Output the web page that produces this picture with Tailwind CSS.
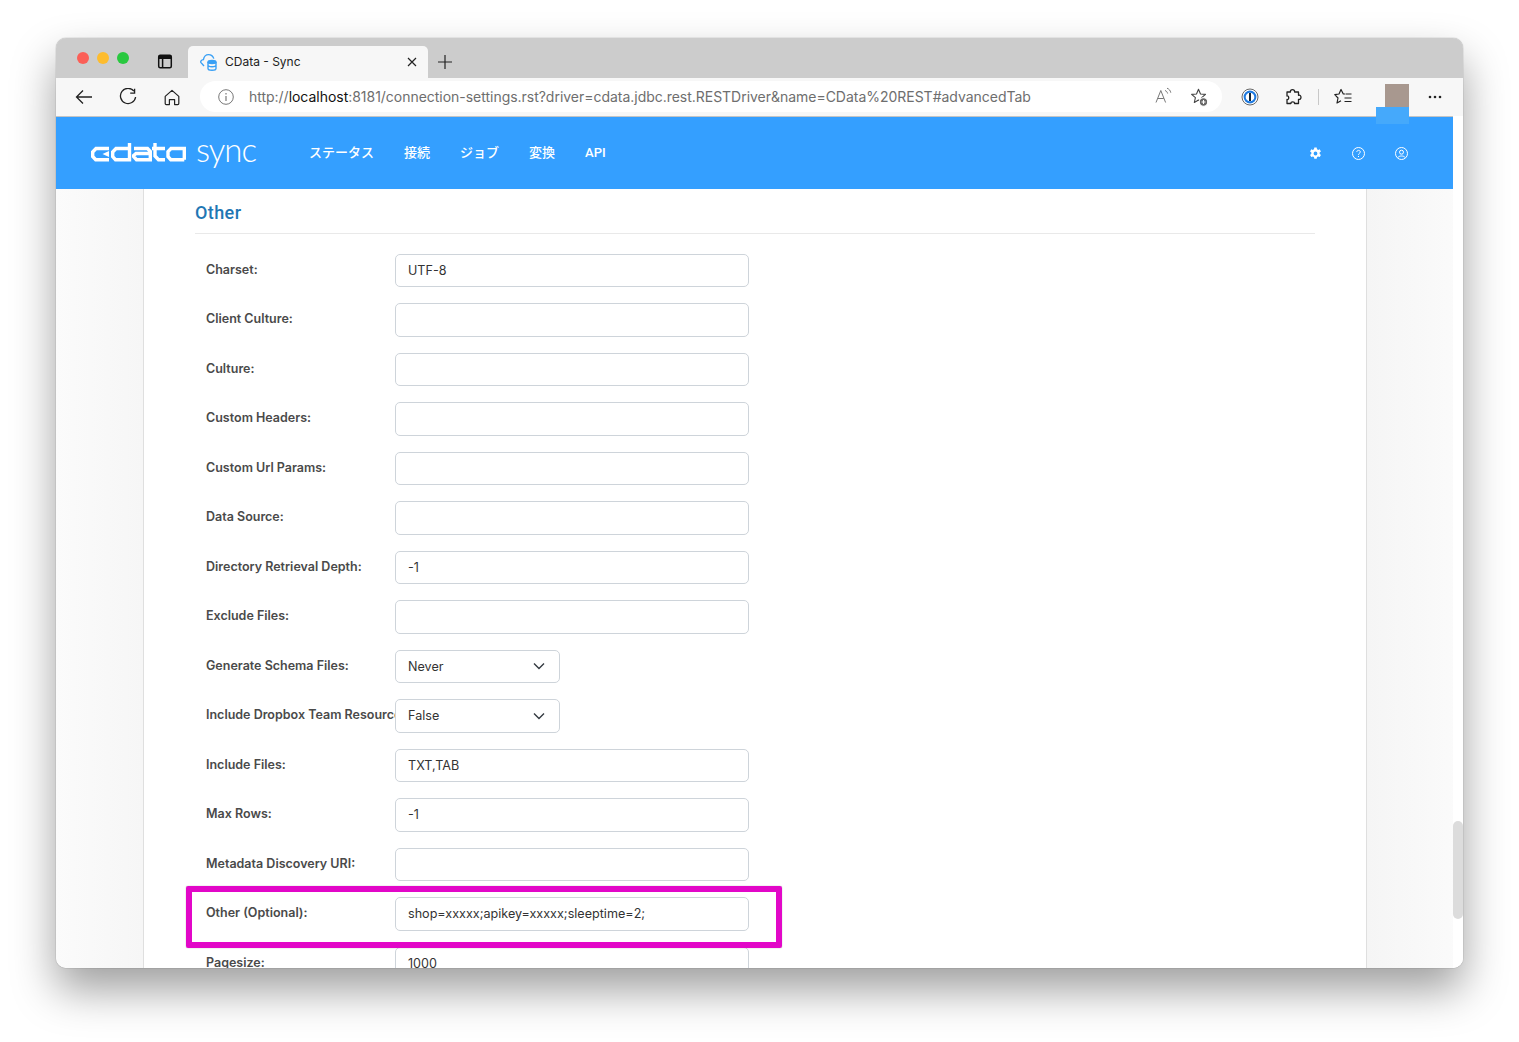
<!DOCTYPE html>
<html>
<head>
<meta charset="utf-8">
<script src="https://cdn.jsdelivr.net/npm/@tailwindcss/browser@4"></script>
<title>CData - Sync</title>
</head>
<body class="bg-white h-[1042px] w-[1519px] overflow-hidden font-['Roboto','Noto_Sans_CJK_JP',sans-serif]">
<div class="relative ml-[56px] mt-[38px] w-[1407px] h-[930px] rounded-[10px] shadow-[0_0_1px_rgba(0,0,0,0.6),0_22px_44px_rgba(0,0,0,0.38)] overflow-hidden bg-white flex flex-col">
  <!-- Title bar -->
  <div class="h-[40px] shrink-0 bg-[#cccccc] flex items-start relative">
    <div class="flex gap-[8px] ml-[21px] mt-[14px]">
      <span class="w-[12px] h-[12px] rounded-full bg-[#fb5f57] "></span>
      <span class="w-[12px] h-[12px] rounded-full bg-[#fdbc2e]"></span>
      <span class="w-[12px] h-[12px] rounded-full bg-[#29c83f]"></span>
    </div>
    <svg class="ml-[28px] mt-[16px]" width="16" height="15" viewBox="0 0 16 15" fill="none" stroke="#111" stroke-width="1.5"><rect x="1.7" y="1.2" width="12.6" height="12.6" rx="1.5"/><path d="M1.7 3.4h12.6" stroke-width="3"/><path d="M5.6 4v9.6"/></svg>
    <div class="ml-[15px] mt-[8px] w-[240px] h-[32px] bg-[#f7f7f7] rounded-t-[5px] flex items-center text-[12px] text-[#222] font-['Inter',sans-serif] relative">
      <svg class="ml-[11px]" width="20" height="18" viewBox="0 0 20 18" fill="none" stroke="#3aa0f5" stroke-width="1.4"><path d="M5 13 L1.8 9.4 C1.4 8.8 2 7 4.4 6.6 C5 3.4 7 1.6 9.5 1.6 C12 1.6 14 3.2 14.8 5.6"/><ellipse cx="13" cy="9" rx="4" ry="1.5" fill="#3aa0f5"/><path d="M9 9v6.5c0 1 1.8 1.8 4 1.8s4-.8 4-1.8V9M9 12c0 1 1.8 1.7 4 1.7s4-.7 4-1.7M9 14.5"/></svg>
      <span class="ml-[6px]">CData - Sync</span>
      <svg class="absolute right-[11px] top-[11px]" width="10" height="10" viewBox="0 0 10 10" stroke="#222" stroke-width="1.2"><path d="M1 1l8 8M9 1l-8 8"/></svg>
    </div>
    <svg class="ml-[9px] mt-[16px]" width="16" height="16" viewBox="0 0 16 16" stroke="#222" stroke-width="1.2"><path d="M8 1v14M1 8h14"/></svg>
  </div>
  <!-- Toolbar -->
  <div class="h-[39px] shrink-0 bg-[#f7f7f7] border-b border-[#c4c4c4] flex items-center relative">
    <svg class="ml-[19px]" width="18" height="16" viewBox="0 0 18 16" fill="none" stroke="#222" stroke-width="1.3"><path d="M17 8H1.5M8 1.5 1.5 8 8 14.5"/></svg>
    <svg class="ml-[26px]" width="18" height="18" viewBox="0 0 18 18" fill="none" stroke="#222" stroke-width="1.3"><path d="M15 3.2A7.6 7.6 0 1 0 16.6 9"/><path d="M15.6 0.8v4.4h-4.4"/></svg>
    <svg class="ml-[27px]" width="16" height="17" viewBox="0 0 16 17" fill="none" stroke="#222" stroke-width="1.2"><path d="M1.2 7.4 8 1.4l6.8 6v7.2a1 1 0 0 1-1 1h-3.2v-5H5.4v5H2.2a1 1 0 0 1-1-1z" stroke-linejoin="round"/></svg>
    <div class="absolute left-[144px] top-[3px] w-[1022px] h-[31px] bg-white rounded-full flex items-center">
      <svg class="ml-[18px]" width="16" height="16" viewBox="0 0 16 16" fill="none" stroke="#777" stroke-width="1"><circle cx="8" cy="8" r="7.3"/><path d="M8 7v5M8 4v1.4" stroke-width="1.2"/></svg>
      <span class="ml-[15px] text-[14px] text-[#6e6e6e] font-['Inter',sans-serif] whitespace-nowrap tracking-[-0.025px]">http://<span class="text-[#111]">localhost</span>:8181/connection-settings.rst?driver=cdata.jdbc.rest.RESTDriver&amp;name=CData%20REST#advancedTab</span>
      <svg class="absolute left-[955px] top-[6px]" width="18" height="18" viewBox="0 0 18 18" fill="none" stroke="#777" stroke-width="1"><path d="M1 15.500 5.800 3.500l4.800 12M2.800 11.500h6"/><path d="M10 3.500c1.400.5 2.300 1.500 2.600 3M12 1.200c2 .7 3.400 2.300 3.800 4.500"/></svg>
      <svg class="absolute left-[990px] top-[7px]" width="19" height="20" viewBox="0 0 19 20" fill="none" stroke="#444" stroke-width="1.1"><path d="M8.500 1.200 10.500 6l5 .4-3.800 3.300 1 4.800-4.200-2.500-4.200 2.500 1.100-4.800L1.600 6.400 6.500 6z" stroke-linejoin="round"/><circle cx="13.500" cy="14" r="4.200" fill="#666" stroke="#fff"/><path d="M13.500 12v4M11.500 14h4" stroke="#fff"/></svg>
    </div>
    <svg class="absolute left-[1185px] top-[10px]" width="18" height="18" viewBox="0 0 18 18"><circle cx="9" cy="9" r="8" fill="#fff" stroke="#666" stroke-width="1"/><circle cx="9" cy="9" r="6.400" fill="#1f7ae0"/><circle cx="9" cy="9" r="4.300" fill="#fff"/><rect x="8" y="5" width="2" height="8" fill="#123"/></svg>
    <svg class="absolute left-[1228px] top-[10px]" width="18" height="18" viewBox="0 0 18 18" fill="none" stroke="#222" stroke-width="1.300"><path d="M6.500 4C5.500 .8 11.500 .8 10.500 4H14.500V7.300C17.800 6.300 17.800 12.300 14.500 11.300V15.500H10.500C11.300 13.200 6.200 13.200 7 15.500H3V11.500C5.300 12.300 5.300 7.200 3 8V4z" stroke-linejoin="round"/></svg>
    <span class="absolute left-[1262px] top-[11px] w-px h-[16px] bg-[#c8c8c8]"></span>
    <svg class="absolute left-[1278px] top-[10px]" width="18" height="18" viewBox="0 0 18 18" fill="none" stroke="#222" stroke-width="1.200"><path d="M11 6H9.300L7 1.500 5 6l-4.200.7L4 10l-1 5 4-2.300" stroke-linejoin="round"/><path d="M11.500 6h6M10.500 10h7M10.500 13.500h7"/></svg>
    <svg class="absolute left-[1372px] top-[17px]" width="14" height="4" viewBox="0 0 14 4" fill="#222"><circle cx="2" cy="2" r="1.300"/><circle cx="7" cy="2" r="1.300"/><circle cx="12" cy="2" r="1.300"/></svg>
  </div>
  <!-- Redaction patches overlapping the bar -->
  <div class="absolute left-[1329px] top-[46px] w-[24px] h-[23px] bg-[#a8988f] z-20"></div>
  <div class="absolute left-[1320px] top-[69px] w-[33px] h-[17px] bg-[#45a9fb] z-20"></div>
  <!-- App -->
  <div class="flex-1 flex flex-col min-h-0 relative">
    <header class="h-[72px] shrink-0 w-[1397px] bg-[#349fff] flex items-center text-white">
      <svg class="ml-[35px] mt-[-1px]" width="95" height="19" viewBox="0 0 95 19" fill="none" stroke="#fff" stroke-width="3.400"><path d="M18 5.500H5L1.700 9v4.500L4.700 16.700H18"/><path d="M18 8 11.500 11 18 14z" fill="#fff" stroke="none"/><path d="M38.500 0V16.700H24.500L21.700 13.500V9L25 5.500H38"/><path d="M43 5.500H56.500L59.300 8.500V16.700H45.500L42.700 13.500V12.500L45 10.500H58"/><path d="M64 0V13L67.500 16.700H74M61 5.500H74"/><path d="M93.300 16.700V5.500H80L77 8.700V13.500L79.800 16.700H93.300"/></svg>
      <span class="ml-[10px] text-[33px] leading-none font-light font-['Lato','Roboto',sans-serif] tracking-[-1px] mt-[-7px]">sync</span>
      <nav class="flex ml-[53px] gap-[30px] text-[13px] font-medium font-['Roboto','Noto_Sans_CJK_JP',sans-serif]">
        <span>ステータス</span><span>接続</span><span>ジョブ</span><span>変換</span><span>API</span>
      </nav>
      <div class="ml-auto mr-[45px] flex items-center gap-[30px]">
        <svg width="13" height="13" viewBox="0 0 24 24" fill="#fff"><path fill-rule="evenodd" d="M14.200 1h-4.400l-.6 3.200a8.500 8.500 0 0 0-2 1.200l-3-1.100-2.200 3.800 2.400 2.100a8.500 8.500 0 0 0 0 2.400L2 14.700l2.200 3.800 3-1.100a8.500 8.500 0 0 0 2 1.200l.6 3.200h4.400l.6-3.200a8.500 8.500 0 0 0 2-1.200l3 1.100 2.200-3.800-2.400-2.100a8.500 8.500 0 0 0 0-2.400L22 8.100l-2.200-3.800-3 1.100a8.500 8.500 0 0 0-2-1.200zM12 8.500a3.500 3.500 0 1 1 0 7 3.500 3.500 0 0 1 0-7z"/></svg>
        <svg width="13" height="13" viewBox="0 0 13 13" fill="none" stroke="#fff" stroke-width="1"><circle cx="6.500" cy="6.500" r="6"/><path d="M4.800 5c0-2.200 3.500-2.200 3.500 0 0 1.300-1.800 1.300-1.800 2.800M6.500 9v1"/></svg>
        <svg width="13" height="13" viewBox="0 0 13 13" fill="none" stroke="#fff" stroke-width="1"><circle cx="6.500" cy="6.500" r="6"/><circle cx="6.500" cy="5.200" r="2"/><path d="M3 10.500c.5-2 6.500-2 7 0"/></svg>
      </div>
    </header>
    <div class="flex-1 min-h-0 flex">
      <div class="w-[87px] shrink-0 bg-gradient-to-r from-[#fbfbfb] to-[#f6f6f6]"></div>
      <main class="w-[1224px] shrink-0 bg-white border-x border-[#dfdfdf] pl-[51px] pr-[51px] overflow-hidden">
        <h2 class="mt-[13px] text-[18px] leading-[22px] font-medium text-[#1f77b4] tracking-[0.4px]">Other</h2>
        <div class="mt-[9px] border-t border-[#e9e9e9] pt-[19.750px] w-[1120px] flex flex-col gap-[16px] text-[12.600px] text-[#333] font-['Inter',sans-serif]">
          <div class="flex h-[33.500px] shrink-0"><label class="w-[200px] pl-[11px] pt-[8px] text-[12.500px] leading-[16px] font-semibold text-[#4a4a4a] whitespace-nowrap">Charset:</label><div class="w-[354px] border border-[#ced4da] rounded-[5px] px-[12px] pt-[1px] flex items-center bg-white">UTF-8</div></div>
          <div class="flex h-[33.500px] shrink-0"><label class="w-[200px] pl-[11px] pt-[8px] text-[12.500px] leading-[16px] font-semibold text-[#4a4a4a] whitespace-nowrap">Client Culture:</label><div class="w-[354px] border border-[#ced4da] rounded-[5px] px-[12px] pt-[1px] flex items-center bg-white"></div></div>
          <div class="flex h-[33.500px] shrink-0"><label class="w-[200px] pl-[11px] pt-[8px] text-[12.500px] leading-[16px] font-semibold text-[#4a4a4a] whitespace-nowrap">Culture:</label><div class="w-[354px] border border-[#ced4da] rounded-[5px] px-[12px] pt-[1px] flex items-center bg-white"></div></div>
          <div class="flex h-[33.500px] shrink-0"><label class="w-[200px] pl-[11px] pt-[8px] text-[12.500px] leading-[16px] font-semibold text-[#4a4a4a] whitespace-nowrap">Custom Headers:</label><div class="w-[354px] border border-[#ced4da] rounded-[5px] px-[12px] pt-[1px] flex items-center bg-white"></div></div>
          <div class="flex h-[33.500px] shrink-0"><label class="w-[200px] pl-[11px] pt-[8px] text-[12.500px] leading-[16px] font-semibold text-[#4a4a4a] whitespace-nowrap">Custom Url Params:</label><div class="w-[354px] border border-[#ced4da] rounded-[5px] px-[12px] pt-[1px] flex items-center bg-white"></div></div>
          <div class="flex h-[33.500px] shrink-0"><label class="w-[200px] pl-[11px] pt-[8px] text-[12.500px] leading-[16px] font-semibold text-[#4a4a4a] whitespace-nowrap">Data Source:</label><div class="w-[354px] border border-[#ced4da] rounded-[5px] px-[12px] pt-[1px] flex items-center bg-white"></div></div>
          <div class="flex h-[33.500px] shrink-0"><label class="w-[200px] pl-[11px] pt-[8px] text-[12.500px] leading-[16px] font-semibold text-[#4a4a4a] whitespace-nowrap">Directory Retrieval Depth:</label><div class="w-[354px] border border-[#ced4da] rounded-[5px] px-[12px] pt-[1px] flex items-center bg-white">-1</div></div>
          <div class="flex h-[33.500px] shrink-0"><label class="w-[200px] pl-[11px] pt-[8px] text-[12.500px] leading-[16px] font-semibold text-[#4a4a4a] whitespace-nowrap">Exclude Files:</label><div class="w-[354px] border border-[#ced4da] rounded-[5px] px-[12px] pt-[1px] flex items-center bg-white"></div></div>
          <div class="flex h-[33.500px] shrink-0"><label class="w-[200px] pl-[11px] pt-[8px] text-[12.500px] leading-[16px] font-semibold text-[#4a4a4a] whitespace-nowrap">Generate Schema Files:</label><div class="w-[165px] border border-[#ced4da] rounded-[5px] pl-[12px] pr-[14px] pt-[1px] flex items-center justify-between bg-white">Never<svg class="mt-[-2px]" width="12" height="8" viewBox="0 0 12 8" fill="none" stroke="#343a40" stroke-width="1.400"><path d="M1 1.500l5 5 5-5"/></svg></div></div>
          <div class="flex h-[33.500px] shrink-0"><label class="w-[200px] pl-[11px] pt-[8px] text-[12.500px] leading-[16px] font-semibold text-[#4a4a4a] whitespace-nowrap overflow-hidden">Include Dropbox Team Resources:</label><div class="w-[165px] border border-[#ced4da] rounded-[5px] pl-[12px] pr-[14px] pt-[1px] flex items-center justify-between bg-white">False<svg class="mt-[-2px]" width="12" height="8" viewBox="0 0 12 8" fill="none" stroke="#343a40" stroke-width="1.400"><path d="M1 1.500l5 5 5-5"/></svg></div></div>
          <div class="flex h-[33.500px] shrink-0"><label class="w-[200px] pl-[11px] pt-[8px] text-[12.500px] leading-[16px] font-semibold text-[#4a4a4a] whitespace-nowrap">Include Files:</label><div class="w-[354px] border border-[#ced4da] rounded-[5px] px-[12px] pt-[1px] flex items-center bg-white">TXT,TAB</div></div>
          <div class="flex h-[33.500px] shrink-0"><label class="w-[200px] pl-[11px] pt-[8px] text-[12.500px] leading-[16px] font-semibold text-[#4a4a4a] whitespace-nowrap">Max Rows:</label><div class="w-[354px] border border-[#ced4da] rounded-[5px] px-[12px] pt-[1px] flex items-center bg-white">-1</div></div>
          <div class="flex h-[33.500px] shrink-0"><label class="w-[200px] pl-[11px] pt-[8px] text-[12.500px] leading-[16px] font-semibold text-[#4a4a4a] whitespace-nowrap">Metadata Discovery URI:</label><div class="w-[354px] border border-[#ced4da] rounded-[5px] px-[12px] pt-[1px] flex items-center bg-white"></div></div>
          <div class="flex h-[33.500px] shrink-0"><label class="w-[200px] pl-[11px] pt-[8px] text-[12.500px] leading-[16px] font-semibold text-[#4a4a4a] whitespace-nowrap">Other (Optional):</label><div class="w-[354px] border border-[#ced4da] rounded-[5px] px-[12px] pt-[1px] flex items-center bg-white">shop=xxxxx;apikey=xxxxx;sleeptime=2;</div></div>
          <div class="flex h-[33.500px] shrink-0"><label class="w-[200px] pl-[11px] pt-[8px] text-[12.500px] leading-[16px] font-semibold text-[#4a4a4a] whitespace-nowrap">Pagesize:</label><div class="w-[354px] border border-[#ced4da] rounded-[5px] px-[12px] pt-[1px] flex items-center bg-white">1000</div></div>
        </div>
      </main>
      <div class="flex-1 bg-gradient-to-r from-[#f5f5f5] to-[#fbfbfb]"></div>
      <div class="absolute right-0 top-[-1px] bottom-0 w-[10px] bg-white">
        <div class="absolute left-0 top-[705px] w-[10px] h-[98px] rounded-full bg-[#dcdcdc]"></div>
      </div>
    </div>
  </div>
  <!-- Annotation -->
  <div class="absolute left-[130px] top-[848px] w-[596px] h-[62px] border-[6px] border-[#e207c8] rounded-[2px] shadow-[0_0_1px_rgba(0,0,0,0.5)] z-10"></div>
</div>
</body>
</html>
